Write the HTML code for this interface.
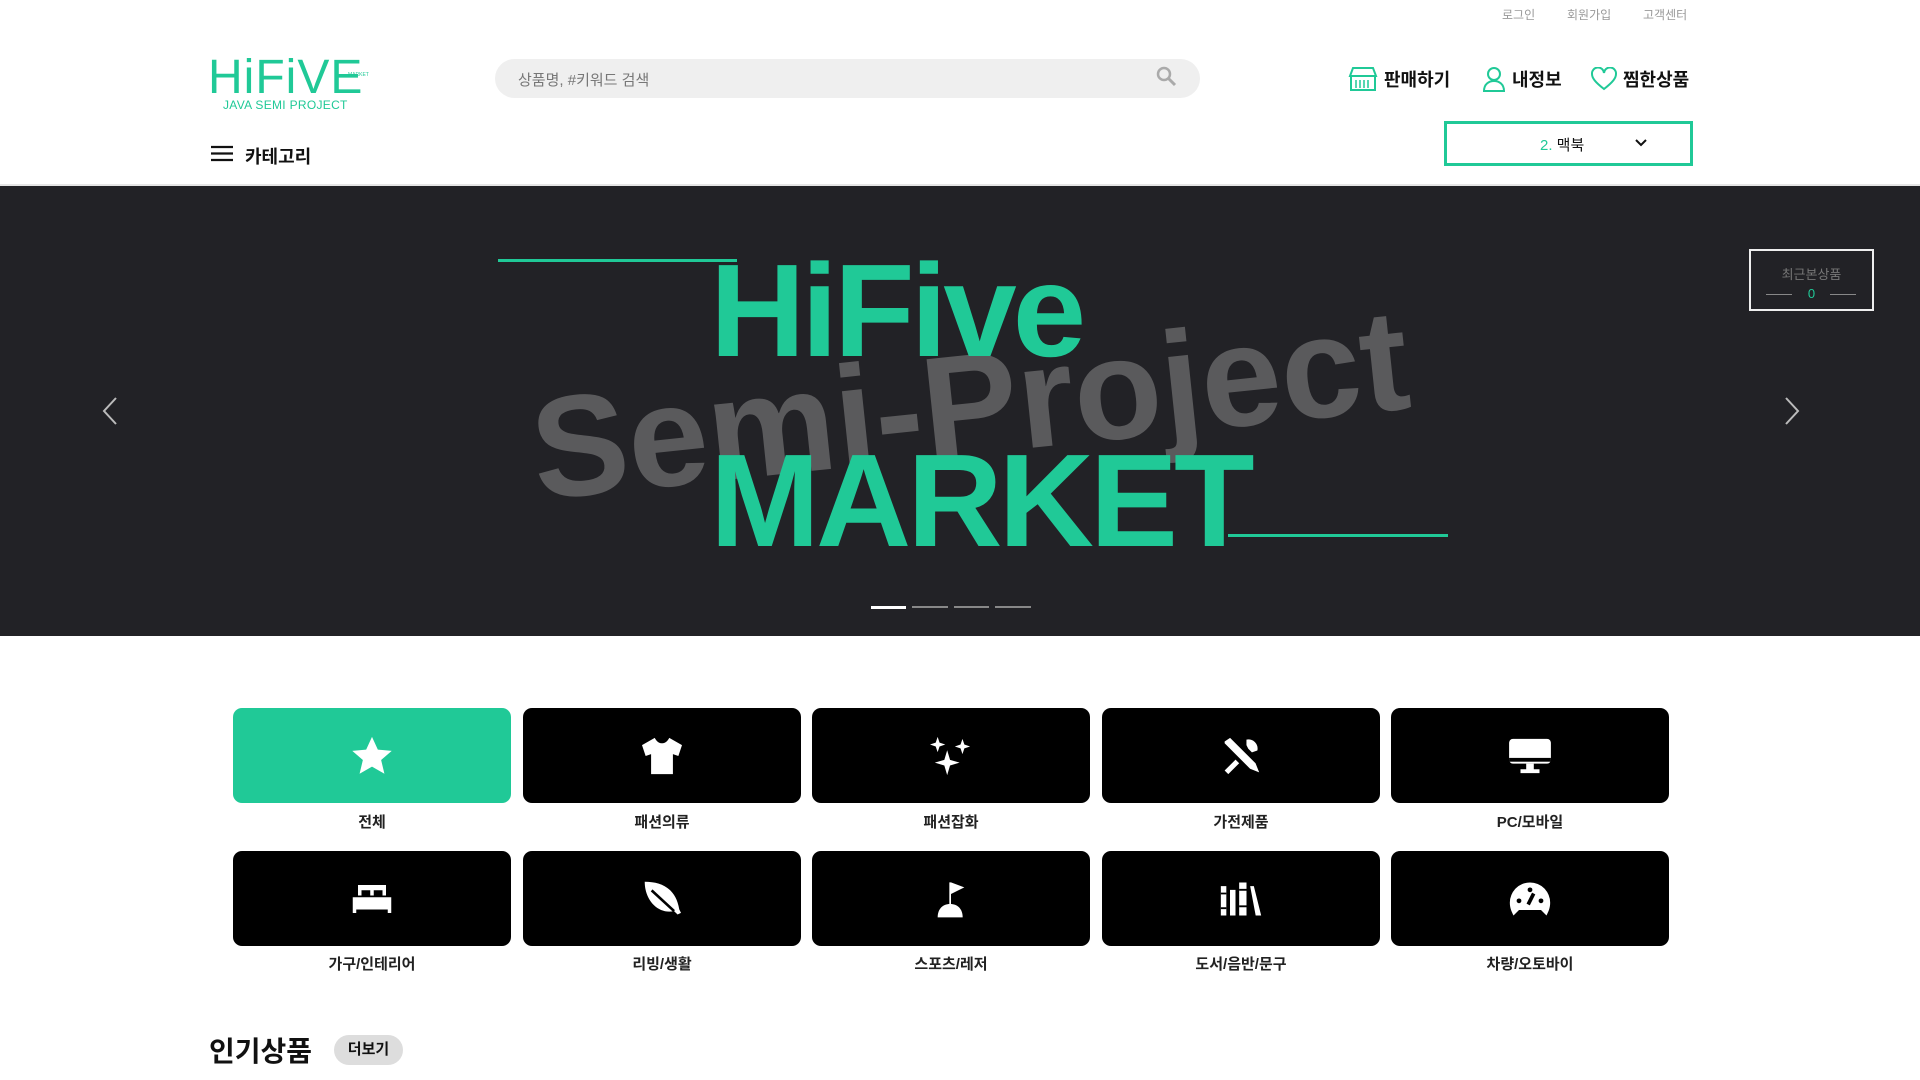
<!DOCTYPE html>
<html><head><meta charset="utf-8"><style>
*{margin:0;padding:0;box-sizing:border-box}
body{width:1920px;height:1080px;overflow:hidden;background:#fff;font-family:"Liberation Sans","Noto Sans CJK KR",sans-serif;position:relative;color:#111}
.a{position:absolute}
.top{top:6px;font-size:12px;color:#999}
.nav{top:66px;font-size:18px;font-weight:bold;color:#111;display:flex;align-items:center;gap:6px}
.tile{position:absolute;width:278px;height:95px;background:#000;border-radius:9px;display:flex;align-items:center;justify-content:center}
.lbl{position:absolute;width:278px;text-align:center;font-size:15px;font-weight:bold;color:#222}
</style></head><body>
<div class="a top" style="left:1502px">로그인</div>
<div class="a top" style="left:1567px">회원가입</div>
<div class="a top" style="left:1643px">고객센터</div>

<div class="a" style="left:208px;top:53px;font-size:48px;color:#20c997;letter-spacing:1px;line-height:50px">HiFiVE</div>
<div class="a" style="left:348px;top:72px;font-size:5px;color:#20c997">MARKET</div>
<div class="a" style="left:223px;top:98px;font-size:12px;color:#20c997;letter-spacing:.3px">JAVA SEMI PROJECT</div>

<div class="a" style="left:495px;top:59px;width:705px;height:39px;background:#efefef;border-radius:20px"></div>
<div class="a" style="left:518px;top:69px;font-size:15px;color:#777">상품명, #키워드 검색</div>
<svg class="a" style="left:1156px;top:66px" width="22" height="22" viewBox="0 0 22 22"><circle cx="8" cy="8" r="6" fill="none" stroke="#aaa" stroke-width="2.5"/><path d="M12 12l7 7" stroke="#aaa" stroke-width="3"/></svg>

<div class="a nav" style="left:1348px"><svg width="30" height="26" viewBox="0 0 30 26"><path d="M3 10V24H27V10M2 10L5 2H25L28 10Z M2 10h26" fill="none" stroke="#20c997" stroke-width="2"/><path d="M8 14v8M12 14v8M16 14v8M20 14v8" stroke="#20c997" stroke-width="1.5"/></svg>판매하기</div>
<div class="a nav" style="left:1482px"><svg width="24" height="26" viewBox="0 0 24 26"><circle cx="12" cy="8" r="6" fill="none" stroke="#20c997" stroke-width="2"/><path d="M2 25c0-7 5-10 10-10s10 3 10 10z" fill="none" stroke="#20c997" stroke-width="2"/></svg>내정보</div>
<div class="a nav" style="left:1591px"><svg width="26" height="24" viewBox="0 0 26 24"><path d="M13 22C4 15 1 11 1 7a6 6 0 0 1 12-1a6 6 0 0 1 12 1c0 4-3 8-12 15z" fill="none" stroke="#20c997" stroke-width="2"/></svg>찜한상품</div>

<div class="a" style="left:1444px;top:121px;width:249px;height:45px;border:3px solid #20c997"></div>
<div class="a" style="left:1540px;top:134px;font-size:15px"><span style="color:#20c997">2.</span> 맥북</div>
<svg class="a" style="left:1635px;top:138px" width="12" height="10"><path d="M1 2l5 5 5-5" fill="none" stroke="#111" stroke-width="2"/></svg>

<svg class="a" style="left:211px;top:145px" width="22" height="17"><path d="M0 2h22M0 8.5h22M0 15h22" stroke="#111" stroke-width="2.2"/></svg>
<div class="a" style="left:245px;top:143px;font-size:18px;font-weight:bold">카테고리</div>

<div class="a" style="left:0;top:184px;width:1920px;height:2px;background:#e5e5e5"></div>
<div class="a" style="left:0;top:186px;width:1920px;height:450px;background:#222226;overflow:hidden">
 <div class="a" style="left:500px;top:144px;width:940px;text-align:center;font-size:144px;font-weight:bold;color:#5a5a5c;letter-spacing:0px;transform:rotate(-6deg);line-height:150px;white-space:nowrap">Semi-Project</div>
 <div class="a" style="left:498px;top:73px;width:239px;height:3px;background:#20c997"></div>
 <div class="a" style="left:1228px;top:348px;width:220px;height:3px;background:#20c997"></div>
 <div class="a" style="left:710px;top:50px;font-size:132px;font-weight:bold;color:#20c997;letter-spacing:-4px;line-height:150px">HiFive</div>
 <div class="a" style="left:710px;top:240px;font-size:132px;font-weight:bold;color:#20c997;letter-spacing:-4px;line-height:150px">MARKET</div>
 <svg class="a" style="left:100px;top:210px" width="20" height="30"><path d="M16 2L4 15l12 13" fill="none" stroke="#bbb" stroke-width="2"/></svg>
 <svg class="a" style="left:1782px;top:210px" width="20" height="30"><path d="M4 2l12 13L4 28" fill="none" stroke="#bbb" stroke-width="2"/></svg>
 <div class="a" style="left:1749px;top:63px;width:125px;height:62px;border:2px solid #eee"></div>
 <div class="a" style="left:1749px;top:78px;width:125px;text-align:center;font-size:13px;color:#777">최근본상품</div>
 <div class="a" style="left:1766px;top:108px;width:26px;height:1px;background:#888"></div>
 <div class="a" style="left:1830px;top:108px;width:26px;height:1px;background:#888"></div>
 <div class="a" style="left:1749px;top:100px;width:125px;text-align:center;font-size:13px;color:#20c997">0</div>
 <div class="a" style="left:871px;top:420px;width:35px;height:3px;background:#fff"></div>
 <div class="a" style="left:912px;top:420px;width:36px;height:2px;background:#888"></div>
 <div class="a" style="left:954px;top:420px;width:35px;height:2px;background:#888"></div>
 <div class="a" style="left:995px;top:420px;width:36px;height:2px;background:#888"></div>
</div>

<div class="tile" style="left:233px;top:708px;background:#20c997"><svg width="44" height="42" viewBox="0 0 24 23"><path d="M12 1l3.2 7 7.6.7-5.8 5 1.8 7.5L12 17.3 5.2 21.2 7 13.7 1.2 8.7 8.8 8z" fill="#fff"/></svg></div>
<div class="tile" style="left:523px;top:708px"><svg width="44" height="40" viewBox="0 0 24 22"><path d="M8 1l-7 4 2 6 3-1v11h12V10l3 1 2-6-7-4c-1 2-2.5 3-4 3S9 3 8 1z" fill="#fff"/></svg></div>
<div class="tile" style="left:812px;top:708px"><svg width="48" height="42" viewBox="0 0 24 22"><path d="M10 8l1.5 5 5 1.5-5 1.5L10 21l-1.5-5-5-1.5 5-1.5zM5 1l1 3 3 1-3 1-1 3-1-3-3-1 3-1zM18 2l1 3 3 1-3 1-1 3-1-3-3-1 3-1z" fill="#fff"/></svg></div>
<div class="tile" style="left:1102px;top:708px"><svg width="46" height="40" viewBox="0 0 24 22"><path d="M3 3l3-2 14 14 2 5-5-2L3 4zM15 2a5 5 0 0 1 6 6l-3 1-2-2-1-2zM9 13l-6 6 2 2 6-6z" fill="#fff"/></svg></div>
<div class="tile" style="left:1391px;top:708px"><svg width="46" height="38" viewBox="0 0 24 20"><rect x="1" y="1" width="22" height="13" rx="2" fill="#fff"/><rect x="1" y="11" width="22" height="2" fill="#000"/><path d="M10 14h4v3h3v2H7v-2h3z" fill="#fff"/></svg></div>
<div class="lbl" style="left:233px;top:811px">전체</div>
<div class="lbl" style="left:523px;top:811px">패션의류</div>
<div class="lbl" style="left:812px;top:811px">패션잡화</div>
<div class="lbl" style="left:1102px;top:811px">가전제품</div>
<div class="lbl" style="left:1391px;top:811px">PC/모바일</div>

<div class="tile" style="left:233px;top:851px"><svg width="42" height="32" viewBox="0 0 24 18"><path d="M4 1h16v6H4z" fill="#fff"/><rect x="6" y="4" width="5" height="3" fill="#000"/><rect x="13" y="4" width="5" height="3" fill="#000"/><path d="M1 8h22v9h-2v-2H3v2H1z" fill="#fff"/></svg></div>
<div class="tile" style="left:523px;top:851px"><svg width="42" height="38" viewBox="0 0 24 22"><path d="M2 1c10 0 18 4 20 16l1 2-2 1-2-2C10 20 2 12 2 1z" fill="#fff"/><path d="M6 6l13 12" stroke="#000" stroke-width="1.5"/></svg></div>
<div class="tile" style="left:812px;top:851px"><svg width="40" height="40" viewBox="0 0 24 24"><path d="M11 2h1v13h-1zM12 2l8 3-8 4z" fill="#fff"/><path d="M4 23c0-5 3-8 7.5-8S19 18 19 23z" fill="#fff"/></svg></div>
<div class="tile" style="left:1102px;top:851px"><svg width="44" height="38" viewBox="0 0 24 20"><path d="M1 3h3v16H1zM6 5h3v14H6zM11 1h4v18h-4zM17 3h2l4 16h-3z" fill="#fff"/><path d="M1 7h3M1 15h3M11 5h4M11 14h4" stroke="#000"/></svg></div>
<div class="tile" style="left:1391px;top:851px"><svg width="44" height="38" viewBox="0 0 24 20"><path d="M12 1a11 11 0 0 1 11 11c0 3-1 5-2 7l-3-3H6l-3 3c-1-2-2-4-2-7A11 11 0 0 1 12 1z" fill="#fff"/><circle cx="6" cy="11" r="1.3" fill="#000"/><circle cx="18" cy="11" r="1.3" fill="#000"/><circle cx="12" cy="5" r="1.3" fill="#000"/><path d="M14 7l-3 6" stroke="#000" stroke-width="2"/></svg></div>
<div class="lbl" style="left:233px;top:953px">가구/인테리어</div>
<div class="lbl" style="left:523px;top:953px">리빙/생활</div>
<div class="lbl" style="left:812px;top:953px">스포츠/레저</div>
<div class="lbl" style="left:1102px;top:953px">도서/음반/문구</div>
<div class="lbl" style="left:1391px;top:953px">차량/오토바이</div>

<div class="a" style="left:209px;top:1030px;font-size:28px;font-weight:bold">인기상품</div>
<div class="a" style="left:334px;top:1035px;width:69px;height:30px;border-radius:15px;background:#ddd;font-size:15px;font-weight:bold;text-align:center;line-height:30px">더보기</div>
</body></html>
